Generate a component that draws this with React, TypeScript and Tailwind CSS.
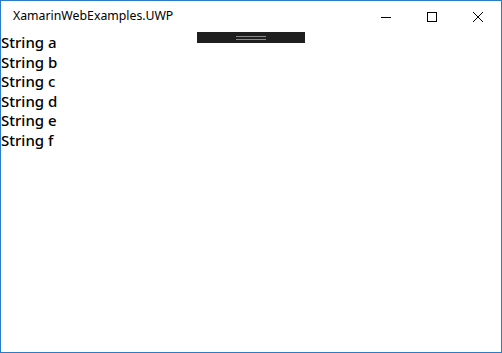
import React from "react";

export default function App() {
  const items = ["String a", "String b", "String c", "String d", "String e", "String f"];
  return (
    <div className="w-[502px] h-[353px] border border-[#2b7cc6] bg-white overflow-hidden flex flex-col" style={{ fontFamily: '"Noto Sans", "Open Sans", sans-serif' }}>
      <div className="h-[31px] flex items-center shrink-0">
        <div className="pl-[12px] text-[12.3px] text-black leading-none flex-1">XamarinWebExamples.UWP</div>
        <div className="w-[46px] h-full flex items-center justify-center">
          <svg width="10" height="10" viewBox="0 0 10 10"><path d="M0 5.5H10" stroke="#000" strokeWidth="1" /></svg>
        </div>
        <div className="w-[46px] h-full flex items-center justify-center">
          <svg width="10" height="10" viewBox="0 0 10 10"><rect x="0.5" y="0.5" width="9" height="9" fill="none" stroke="#000" strokeWidth="1" /></svg>
        </div>
        <div className="w-[46px] h-full flex items-center justify-center">
          <svg width="10" height="10" viewBox="0 0 10 10"><path d="M0 0L10 10M10 0L0 10" stroke="#000" strokeWidth="1" /></svg>
        </div>
      </div>
      <div className="relative flex-1">
        <div className="absolute left-[196px] top-0 w-[108px] h-[11px] bg-[#1f1f1f] flex flex-col items-center justify-center gap-[2px]">
          <div className="w-[30px] h-px bg-[#8a8a8a]" />
          <div className="w-[30px] h-px bg-[#8a8a8a]" />
        </div>
        <div className="pt-[1px] flex flex-col">
          {items.map((s) => (
            <div key={s} className="text-[15px] leading-[19.6px] font-medium text-black">{s}</div>
          ))}
        </div>
      </div>
    </div>
  );
}
